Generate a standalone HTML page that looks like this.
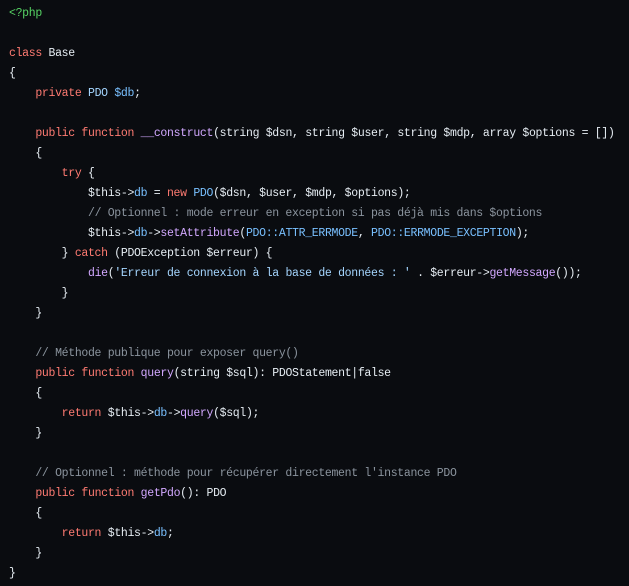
<!DOCTYPE html>
<html><head><meta charset="utf-8"><style>
html,body{margin:0;padding:0;background:#0a0c10;width:629px;height:586px;overflow:hidden}
pre{margin:0;padding:4px 0 0 9px;font-family:"Liberation Mono","DejaVu Sans Mono",monospace;font-size:11.5px;letter-spacing:-0.32px;line-height:20px;color:#e6edf3;white-space:pre}
.k{color:#ff7b72}.v{color:#79c0ff}.f{color:#d2a8ff}.c{color:#8b949e}.s{color:#a5d6ff}.g{color:#56d364}
</style></head><body><pre><span class="g">&lt;?php</span>

<span class="k">class</span> Base
{
    <span class="k">private</span> <span class="s">PDO</span> <span class="v">$db</span>;

    <span class="k">public</span> <span class="k">function</span> <span class="f">__construct</span>(string $dsn, string $user, string $mdp, array $options = [])
    {
        <span class="k">try</span> {
            $this-&gt;<span class="v">db</span> = <span class="k">new</span> <span class="v">PDO</span>($dsn, $user, $mdp, $options);
            <span class="c">// Optionnel : mode erreur en exception si pas déjà mis dans $options</span>
            $this-&gt;<span class="v">db</span>-&gt;<span class="f">setAttribute</span>(<span class="v">PDO::ATTR_ERRMODE</span>, <span class="v">PDO::ERRMODE_EXCEPTION</span>);
        } <span class="k">catch</span> (PDOException $erreur) {
            <span class="f">die</span>(<span class="s">'Erreur de connexion à la base de données : '</span> . $erreur-&gt;<span class="f">getMessage</span>());
        }
    }

    <span class="c">// Méthode publique pour exposer query()</span>
    <span class="k">public</span> <span class="k">function</span> <span class="f">query</span>(string $sql): PDOStatement|false
    {
        <span class="k">return</span> $this-&gt;<span class="v">db</span>-&gt;<span class="f">query</span>($sql);
    }

    <span class="c">// Optionnel : méthode pour récupérer directement l'instance PDO</span>
    <span class="k">public</span> <span class="k">function</span> <span class="f">getPdo</span>(): PDO
    {
        <span class="k">return</span> $this-&gt;<span class="v">db</span>;
    }
}</pre></body></html>
